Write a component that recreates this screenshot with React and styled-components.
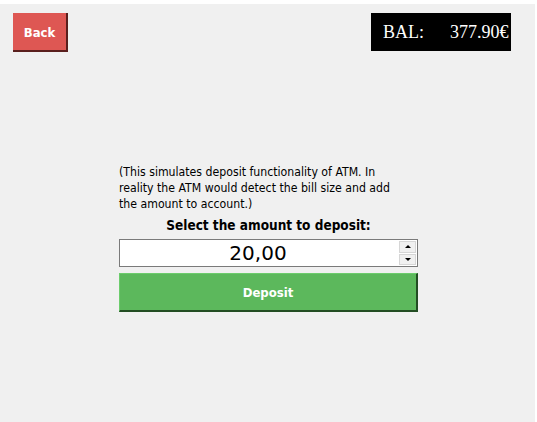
import React, { useState } from 'react';
import styled, { createGlobalStyle } from 'styled-components';

const GlobalStyle = createGlobalStyle`
    html, body {
        margin: 0;
        padding: 0;
        background: #ffffff;
    }
    #root {
        height: 100vh;
    }
`;

const Window = styled.div`
    box-sizing: border-box;
    margin: 4px 2px 0 0;
    height: calc(100% - 4px);
    padding-left: 2px;
    background: #f0f0f0;
    display: flex;
    flex-direction: column;
    font-family: "DejaVu Sans Condensed", "DejaVu Sans", sans-serif;
`;

const TopBar = styled.div`
    display: flex;
    justify-content: space-between;
    align-items: flex-start;
    padding: 9px 24px 0 11px;
`;

const BackButton = styled.button`
    width: 55px;
    height: 39px;
    padding: 2px 0 0;
    border: none;
    border-right: 2px solid #5a1f1d;
    border-bottom: 2px solid #5a1f1d;
    background: #de5753;
    color: #fff;
    font-family: "DejaVu Sans Condensed", "DejaVu Sans", sans-serif;
    font-weight: bold;
    font-size: 13px;
    cursor: pointer;
`;

const Balance = styled.div`
    display: flex;
    align-items: center;
    gap: 26px;
    width: 140px;
    height: 38px;
    box-sizing: border-box;
    padding-left: 12px;
    background: #000;
    color: #fff;
    font-family: "Liberation Serif", serif;
    font-size: 18px;
`;

const Content = styled.div`
    width: 299px;
    margin: 112px auto 0;
    display: flex;
    flex-direction: column;
`;

const Note = styled.p`
    margin: 0;
    padding-right: 18px;
    font-size: 12.2px;
    line-height: 16px;
    color: #000;
`;

const Prompt = styled.div`
    margin-top: 5px;
    text-align: center;
    font-weight: bold;
    font-size: 13.5px;
    line-height: 17px;
`;

const SpinBox = styled.div`
    margin-top: 5px;
    height: 28px;
    box-sizing: border-box;
    border: 1px solid #7a7a7a;
    background: #fff;
    display: flex;
    align-items: stretch;
`;

const Value = styled.div`
    flex: 1;
    display: flex;
    align-items: center;
    justify-content: center;
    padding-right: 3px;
    font-family: "DejaVu Sans", sans-serif;
    font-size: 20px;
`;

const Arrows = styled.div`
    width: 17px;
    padding: 1px 1px 1px 0;
    display: flex;
    flex-direction: column;
    gap: 1px;
`;

const Arrow = styled.div`
    flex: 1;
    background: #f0f0f0;
    border: 1px solid #d6d6d6;
    display: flex;
    align-items: center;
    justify-content: center;
    &::after {
        content: '';
        border-left: 3px solid transparent;
        border-right: 3px solid transparent;
        ${p => p.up ? 'border-bottom: 3px solid #000;' : 'border-top: 3px solid #000;'}
    }
`;

const DepositButton = styled.button`
    margin-top: 6px;
    height: 39px;
    border: none;
    border-top: 1px solid #6ccc6c;
    border-left: 1px solid #6ccc6c;
    border-right: 2px solid #234d23;
    border-bottom: 2px solid #234d23;
    background: #5cb85c;
    color: #fff;
    font-family: "DejaVu Sans Condensed", "DejaVu Sans", sans-serif;
    font-weight: bold;
    font-size: 13px;
    cursor: pointer;
`;

export default function App() {
    const [amount] = useState(20);

    return (
        <>
            <GlobalStyle />
            <Window>
                <TopBar>
                    <BackButton>Back</BackButton>
                    <Balance>
                        <span>BAL:</span>
                        <span>377.90€</span>
                    </Balance>
                </TopBar>
                <Content>
                    <Note>
                        (This simulates deposit functionality of ATM. In reality the ATM would detect the bill size and add the amount to account.)
                    </Note>
                    <Prompt>Select the amount to deposit:</Prompt>
                    <SpinBox>
                        <Value>{amount.toFixed(2).replace('.', ',')}</Value>
                        <Arrows>
                            <Arrow up />
                            <Arrow />
                        </Arrows>
                    </SpinBox>
                    <DepositButton>Deposit</DepositButton>
                </Content>
            </Window>
        </>
    );
}
